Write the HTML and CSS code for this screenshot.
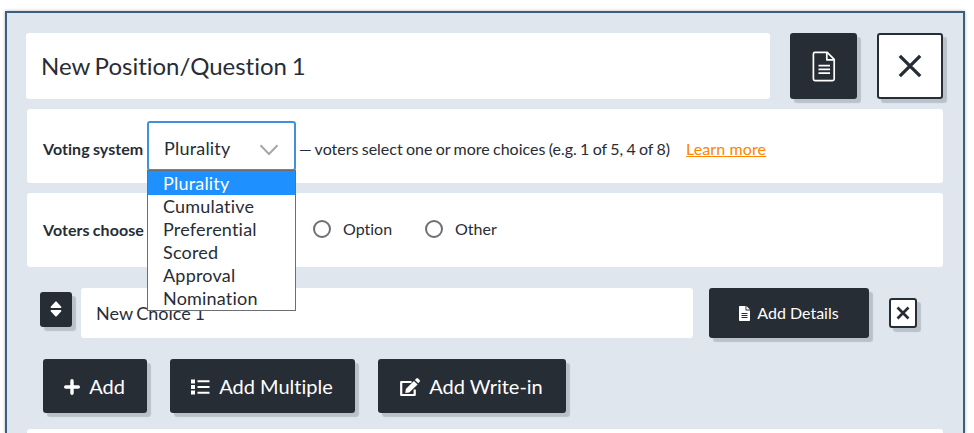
FILE: index.html
```html
<!DOCTYPE html>
<html lang="en">
<head>
<meta charset="utf-8">
<title>Ballot editor</title>
<link rel="stylesheet" href="styles.css">
</head>
<body>
<main class="panel">
  <header class="title-row">
    <div class="title-field"><span>New Position/Question 1</span></div>
    <button class="btn btn-doc" aria-label="Details">
      <svg width="24" height="31" viewBox="0 0 24 31" fill="none" stroke="#fff" stroke-width="1.7" stroke-linejoin="round"><path d="M3 1.4h12.2l7 7V28q0 1.6-1.6 1.6H3Q1.4 29.600 1.400 28V3Q1.400 1.400 3 1.400Z"/><path d="M14.800 1.400v7.400h7.400"/><path d="M6.500 14.600h11.500M6.500 18.400h11.500M6.500 22.200h11.500"/></svg>
    </button>
    <button class="btn btn-light btn-close" aria-label="Remove question">
      <svg width="24" height="24" viewBox="0 0 24 24" stroke="#272d35" stroke-width="3.300"><path d="M1.800 1.800l20.400 20.400M22.200 1.800l-20.400 20.400"/></svg>
    </button>
  </header>

  <section class="card">
    <span class="label label-system">Voting system</span>
    <div class="select">
      <span class="select-value">Plurality</span>
      <svg class="chevron" width="20" height="12" viewBox="0 0 20 12" fill="none" stroke="#a5a8ab" stroke-width="2"><path d="M1.500 1.300L10 10l8.500-8.700"/></svg>
      <ul class="menu">
        <li class="active">Plurality</li>
        <li>Cumulative</li>
        <li>Preferential</li>
        <li>Scored</li>
        <li>Approval</li>
        <li>Nomination</li>
      </ul>
    </div>
    <span class="hint">— voters select one or more choices (e.g. 1 of 5, 4 of 8)</span>
    <a class="learn">Learn more</a>
  </section>

  <section class="card card-options">
    <span class="label label-choose">Voters choose</span>
    <span class="radio"><i class="dot"></i><span class="opt">Option</span></span>
    <span class="radio"><i class="dot"></i><span class="opt">Other</span></span>
  </section>

  <section class="choice">
    <button class="btn btn-sort" aria-label="Reorder">
      <svg width="12" height="16" viewBox="0 0 12 16" fill="#fff"><path d="M5.300.7q.7-.7 1.400 0l4.600 5q.5 1-.6 1.300H1.300Q.2 6.700.700 5.700ZM1.300 9h9.400q1.100.3.6 1.300l-4.600 5q-.7.700-1.400 0l-4.600-5Q.2 9.300 1.300 9Z"/></svg>
    </button>
    <div class="choice-field"><span>New Choice 1</span></div>
    <button class="btn btn-details">
      <svg width="11" height="15" viewBox="0 0 11 15"><path fill="#fff" d="M0 .8Q0 0 .8 0H6.500v4.500H11v9.700q0 .8-.8.800H.8Q0 15 0 14.200ZM7.400 0L11 3.600H7.400Z"/><path stroke="#272d35" stroke-width="1" d="M2.500 7.500h6M2.500 9.500h6M2.500 11.500h6"/></svg>
      <span>Add Details</span>
    </button>
    <button class="btn btn-light btn-x" aria-label="Remove choice">
      <svg width="14" height="14" viewBox="0 0 14 14" stroke="#272d35" stroke-width="2.700"><path d="M1.500 1.500l11 11M12.500 1.500l-11 11"/></svg>
    </button>
  </section>

  <section class="actions">
    <button class="btn action action-add">
      <svg width="16" height="16" viewBox="0 0 16 16" fill="none" stroke="#fff" stroke-width="3.400" stroke-linecap="round"><path d="M8 1.700v12.600M1.700 8h12.600"/></svg>
      <span>Add</span>
    </button>
    <button class="btn action action-multi">
      <svg width="19" height="16" viewBox="0 0 19 16" fill="#fff"><path d="M0 .5h4v4H0zM0 6h4v4H0zM0 11.500h4v4H0zM6.500 1.300h12v2h-12zM6.500 7h12v2h-12zM6.500 12.700h12v2h-12z"/></svg>
      <span>Add Multiple</span>
    </button>
    <button class="btn action action-write">
      <svg width="20" height="19" viewBox="0 0 20 19"><path fill="none" stroke="#fff" stroke-width="2.200" stroke-linejoin="round" d="M11.500 4H1.200v13h13.500v-5.500"/><path fill="#fff" d="M13.900 2.900l3.700 3.500-8.300 8-4 .7.500-4.200ZM14.900 1.900l1.400-1.400q.9-.8 1.800 0l1.500 1.500q.8.900 0 1.700l-1.300 1.600Z"/></svg>
      <span>Add Write-in</span>
    </button>
  </section>

  <section class="card card-next"></section>
</main>
</body>
</html>
```

FILE: styles.css
```css
* { box-sizing: border-box; }
body {
  margin: 0;
  height: 433px;
  overflow: hidden;
  padding: 11px 9px 0 5px;
  background: #fff;
  font-family: Lato, "Liberation Sans", sans-serif;
  font-size: 16px;
  font-variant-ligatures: none;
  color: #272d35;
  white-space: nowrap;
}
.panel {
  height: 422px;
  padding: 20px 20px 0 19px;
  border: 2px solid #3a5d82;
  border-bottom: 0;
  background: #e0e6ee;
  box-shadow: 0 0 3px rgba(0, 0, 0, .3);
}
.title-row { display: flex; margin-bottom: 10px; }
.title-field {
  display: flex;
  align-items: center;
  width: 744px;
  height: 66px;
  padding: 0 0 2px 15px;
  border-radius: 3px;
  background: #fff;
  font-size: 24px;
  word-spacing: -1.4px;
}
.btn {
  display: flex;
  align-items: center;
  justify-content: center;
  flex: none;
  padding: 0;
  border: 0;
  border-radius: 3px;
  background: #272d35;
  color: #fff;
  font: inherit;
  font-variant-ligatures: none;
  box-shadow: 4px 4px 1px #bbc1ca;
}
.btn-light { border: 2px solid #272d35; background: #fff; }
.btn-doc { width: 67px; height: 66px; margin-left: 20px; }
.btn-close { width: 66px; height: 66px; margin-left: 20px; padding-bottom: 1px; }
.card {
  display: flex;
  align-items: center;
  height: 74px;
  margin: 0 0 10px 1px;
  padding-left: 15px;
  border-radius: 3px;
  background: #fff;
}
.card-options { padding-bottom: 2px; }
.card-next { height: 4px; margin-bottom: 0; border-radius: 3px 3px 0 0; }
.label { width: 105px; padding-left: 1px; font-weight: 700; letter-spacing: .05px; word-spacing: -.7px; }
.label-system, .hint, .learn { padding-top: 4px; }
.label-choose { width: 271px; }
.select {
  position: relative;
  display: flex;
  align-items: center;
  justify-content: space-between;
  width: 149px;
  height: 50px;
  padding: 0 15px 0 15px;
  border: 2px solid #4090dc;
  border-radius: 3px;
  font-size: 18px;
  letter-spacing: .2px;
}
.select-value { padding-top: 4px; }
.chevron { margin-top: 8px; }
.menu {
  position: absolute;
  z-index: 1;
  top: 47px;
  left: -2px;
  width: 149px;
  margin: 0;
  padding: 0;
  border: 1px solid #6b6e72;
  background: #fff;
  list-style: none;
}
.menu li { height: 23px; padding-left: 15px; line-height: 22px; }
.menu .active { height: 24px; line-height: 24px; background: #1e90ff; color: #fff; }
.hint { margin-left: 3px; word-spacing: -.8px; }
.learn { margin-left: 16px; color: #ff8400; text-decoration: underline; letter-spacing: .1px; }
.radio { display: flex; align-items: center; }
.radio + .radio { margin-left: 33px; }
.opt { padding-bottom: 2px; }
.dot {
  width: 18px;
  height: 18px;
  margin-right: 12px;
  border: 2px solid #6b6f75;
  border-radius: 50%;
}
.choice { display: flex; align-items: flex-start; margin: 21px 0 21px 14px; }
.btn-sort { width: 32px; height: 35px; margin-top: 4px; padding-bottom: 2px; }
.choice-field {
  display: flex;
  align-items: center;
  width: 612px;
  height: 50px;
  margin: 0 16px 0 9px;
  padding-left: 15px;
  border-radius: 3px;
  background: #fff;
  font-size: 18px;
  word-spacing: -1px;
}
.btn-details { width: 160px; height: 50px; gap: 7px; }
.btn-details span { padding-bottom: 2px; }
.btn-x { width: 28px; height: 30px; margin: 10px 0 0 20px; }
.actions { display: flex; gap: 23px; margin: 0 0 16px 17px; }
.action { height: 54px; gap: 9px; padding-right: 1px; font-size: 20px; }
.action svg { margin-top: 2px; }
.action-add { width: 104px; }
.action-multi { width: 185px; }
.action-write { width: 188px; }
```
